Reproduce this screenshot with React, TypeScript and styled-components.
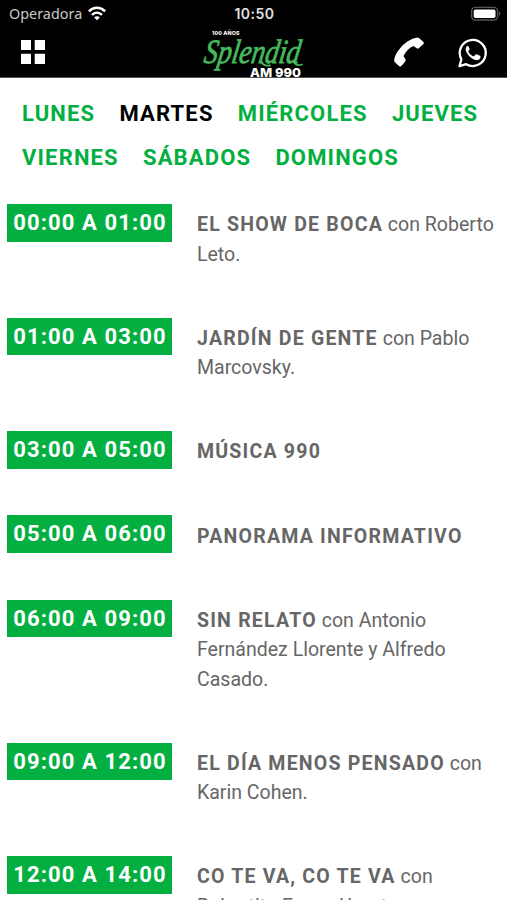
import React from "react";
import styled, { createGlobalStyle } from "styled-components";

const GlobalStyle = createGlobalStyle`
  * { box-sizing: border-box; }
  html, body { margin: 0; padding: 0; background: #fff; overflow: hidden; }
  body { font-family: Roboto, "Liberation Sans", sans-serif; }
`;

const Screen = styled.div`
  width: 507px;
  height: 900px;
  overflow: hidden;
  background: #fff;
`;

const Header = styled.header`
  height: 78px;
  background: #000;
  border-bottom: 1px solid #555;
`;

const StatusBar = styled.div`
  height: 28px;
  display: grid;
  grid-template-columns: 1fr auto 1fr;
  align-items: center;
  padding: 0 7px 0 9px;
  color: #fff;
  font-family: Inter, sans-serif;
`;

const Carrier = styled.div`
  display: flex;
  align-items: center;
  gap: 6px;
  color: #c9c9c9;
  font: 400 14.4px/28px "Noto Sans", sans-serif;

  svg {
    margin-top: -2px;
  }
`;

const Clock = styled.div`
  font-size: 14px;
  font-weight: 600;
  letter-spacing: 0.5px;
  line-height: 28px;
  height: 28px;
  color: #e2e2e2;
`;

const Battery = styled.div`
  justify-self: end;
  display: flex;
  margin: -1px -2px 0 0;
`;

const NavBar = styled.div`
  height: 49px;
  display: flex;
  align-items: flex-start;
`;

const NavSlot = styled.div<{ $left: number; $top: number }>`
  display: flex;
  margin-left: ${(p) => p.$left}px;
  margin-top: ${(p) => p.$top}px;

  svg {
    overflow: visible;
  }
`;

const Days = styled.nav`
  display: flex;
  flex-wrap: wrap;
  column-gap: 24.2px;
  padding: 14px 0 0 22px;
`;

const Day = styled.a<{ $active?: boolean }>`
  font-size: 22px;
  font-weight: 700;
  line-height: 44px;
  letter-spacing: 1.15px;
  color: ${(p) => (p.$active ? "#000" : "#04af41")};
`;

const Schedule = styled.main`
  padding: 24px 0 0 7px;
`;

const Slot = styled.section`
  display: flex;
  align-items: flex-start;
`;

const Time = styled.div`
  flex: none;
  width: 165.4px;
  height: 37.6px;
  background: #04af41;
  color: #fff;
  font-size: 22px;
  font-weight: 700;
  line-height: 37.6px;
  letter-spacing: 1.12px;
  padding-left: 6.2px;
  white-space: nowrap;
`;

const Show = styled.p`
  margin: 0 0 0 24.6px;
  padding: 6.2px 0 48.6px;
  width: 305px;
  color: #666;
  font-size: 19.55px;
  line-height: 29.4px;
`;

const Title = styled.strong`
  font-weight: 700;
  letter-spacing: 1.2px;
`;

const Line = styled.span`
  display: block;
  white-space: nowrap;
`;

const WifiIcon = () => (
  <svg width="18" height="15" viewBox="0 0 18 15" fill="none" stroke="#fff" strokeWidth="2.5">
    <path d="M0.9 5.4C5.5 0.6 12.5 0.6 17.1 5.4" />
    <path d="M4 8.9C6.9 6 11.1 6 14 8.9" />
    <path d="M9 14.3L6.2 11.4C7.8 10 10.2 10 11.8 11.4Z" fill="#fff" stroke="none" />
  </svg>
);

const BatteryIcon = () => (
  <svg width="32" height="16" viewBox="0 0 32 16">
    <rect x="1.6" y="1.4" width="26" height="12.6" rx="3.8" fill="#000" stroke="#555" strokeWidth="1.4" />
    <rect x="3.7" y="3.4" width="21.8" height="8.7" rx="1.8" fill="#fff" />
    <path d="M29.2 5.6Q31.3 7.7 29.2 9.8Z" fill="#777" />
  </svg>
);

const GridIcon = () => (
  <svg width="24" height="24" viewBox="0 0 24 24" fill="#fff">
    <path d="M0 0h10v10H0zM13.7 0h10.3v10H13.7zM0 13.7h10V24H0zM13.7 13.7H24V24H13.7z" />
  </svg>
);

const Logo = () => (
  <svg width="110" height="49" viewBox="0 0 110 49">
    <text x="12" y="6.3" fill="#fff" fontFamily="Inter, sans-serif" fontSize="5.3" fontWeight="800" textLength="27.5">
      100 AÑOS
    </text>
    <text
      transform="translate(3 33.5) skewX(-9)"
      fill="#45b95c"
      stroke="#45b95c"
      strokeWidth="0.8"
      fontFamily="'Liberation Serif', serif"
      fontSize="34"
      fontStyle="italic"
      textLength="96"
      lengthAdjust="spacingAndGlyphs"
    >
      Splendid
    </text>
    <g fill="none" stroke="#45b95c" strokeWidth="1.8" strokeLinecap="round">
      <path d="M61 32Q63 37.5 70 36.5" />
      <path d="M94 32Q95 37.5 102 35.5" />
    </g>
    <text x="50" y="47.6" fill="#fff" fontFamily="Inter, sans-serif" fontSize="12" fontWeight="800" textLength="51" lengthAdjust="spacingAndGlyphs">
      AM 990
    </text>
  </svg>
);

const PhoneIcon = () => (
  <svg width="31" height="31" viewBox="0 0 31 31" fill="#fff">
    <path d="M22.3.8Q23.8-.1 24.9 1.1L29.5 5.1Q30.4 6.1 29.3 7.2L24.7 11.3Q23.6 12.1 22.5 11.1L19.4 9Q13.4 11.6 9.5 19L11.3 22.1Q12.1 23.3 11.2 24.5L7.3 29Q6.3 30 5 29L.9 25.2Q-.2 24.2 .3 22.6C1.7 14.2 12.3 2.4 22.3.8Z" />
  </svg>
);

const WhatsappIcon = () => (
  <svg width="30" height="30" viewBox="0 0 30 30">
    <path d="M1.5 28.2L3.4 21.3A13 13 0 1 1 8.2 26.2Z" fill="none" stroke="#fff" strokeWidth="2.3" strokeLinejoin="round" />
    <path d="M10 7.7c-.7 0-2.7 1.4-2.3 4.1.5 4 5.8 9.6 10 10.3 2.8.4 4.8-1.2 4.8-3.2 0-.8-.3-1-1-1.3l-2.8-1.3c-.7-.3-1.1 0-1.5.5l-1 1.2c-.5.5-1 .3-1.7-.1-1.8-1-3.2-2.4-4-3.9-.4-.7-.1-1.1.5-1.7.6-.7.7-1 .4-1.7l-1-2.3c-.2-.5-.3-.6-.4-.6Z" fill="#fff" />
  </svg>
);

const days = ["LUNES", "MARTES", "MIÉRCOLES", "JUEVES", "VIERNES", "SÁBADOS", "DOMINGOS"];

const shows: { time: string; title: string; lines: string[] }[] = [
  { time: "00:00 A 01:00", title: "EL SHOW DE BOCA", lines: ["con Roberto", "Leto."] },
  { time: "01:00 A 03:00", title: "JARDÍN DE GENTE", lines: ["con Pablo", "Marcovsky."] },
  { time: "03:00 A 05:00", title: "MÚSICA 990", lines: [""] },
  { time: "05:00 A 06:00", title: "PANORAMA INFORMATIVO", lines: [""] },
  { time: "06:00 A 09:00", title: "SIN RELATO", lines: ["con Antonio", "Fernández Llorente y Alfredo", "Casado."] },
  { time: "09:00 A 12:00", title: "EL DÍA MENOS PENSADO", lines: ["con", "Karin Cohen."] },
  { time: "12:00 A 14:00", title: "CO TE VA, CO TE VA", lines: ["con", "Robertito Funes Ugarte."] },
];

export default function App() {
  return (
    <Screen>
      <GlobalStyle />
      <Header>
        <StatusBar>
          <Carrier>
            Operadora <WifiIcon />
          </Carrier>
          <Clock>10:50</Clock>
          <Battery>
            <BatteryIcon />
          </Battery>
        </StatusBar>
        <NavBar>
          <NavSlot $left={21} $top={12}>
            <GridIcon />
          </NavSlot>
          <NavSlot $left={155} $top={1}>
            <Logo />
          </NavSlot>
          <NavSlot $left={84} $top={9}>
            <PhoneIcon />
          </NavSlot>
          <NavSlot $left={33} $top={10}>
            <WhatsappIcon />
          </NavSlot>
        </NavBar>
      </Header>
      <Days>
        {days.map((d) => (
          <Day key={d} $active={d === "MARTES"}>
            {d}
          </Day>
        ))}
      </Days>
      <Schedule>
        {shows.map((s) => (
          <Slot key={s.time}>
            <Time>{s.time}</Time>
            <Show>
              {s.lines.map((line, i) => (
                <Line key={i}>
                  {i === 0 && <Title>{s.title}</Title>} {line}
                </Line>
              ))}
            </Show>
          </Slot>
        ))}
      </Schedule>
    </Screen>
  );
}
